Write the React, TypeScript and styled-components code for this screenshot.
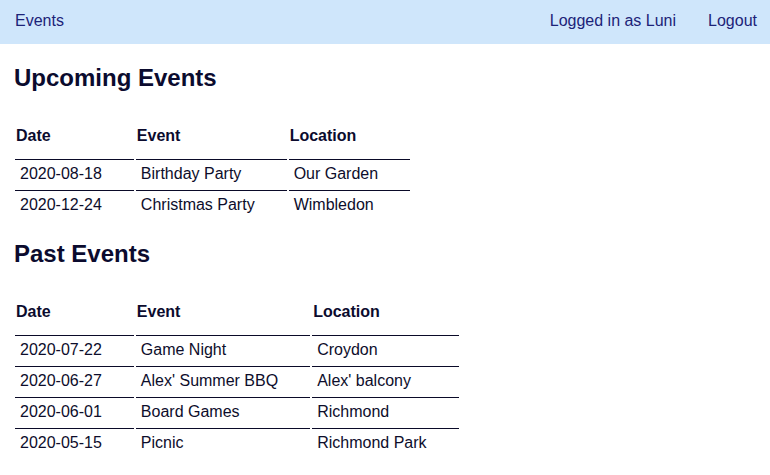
import React from 'react';
import styled, { createGlobalStyle } from 'styled-components';

interface EventRow {
  date: string;
  name: string;
  location: string;
}

const upcoming: EventRow[] = [
  { date: '2020-08-18', name: 'Birthday Party', location: 'Our Garden' },
  { date: '2020-12-24', name: 'Christmas Party', location: 'Wimbledon' },
];

const past: EventRow[] = [
  { date: '2020-07-22', name: 'Game Night', location: 'Croydon' },
  { date: '2020-06-27', name: "Alex' Summer BBQ", location: "Alex' balcony" },
  { date: '2020-06-01', name: 'Board Games', location: 'Richmond' },
  { date: '2020-05-15', name: 'Picnic', location: 'Richmond Park' },
];

const EventTable = ({ rows }: { rows: EventRow[] }) => (
  <Table>
    <thead>
      <tr>
        <Th>Date</Th>
        <Th>Event</Th>
        <Th>Location</Th>
      </tr>
    </thead>
    <tbody>
      {rows.map((row, index) => (
        <tr key={index}>
          <Td>{row.date}</Td>
          <Td>{row.name}</Td>
          <Td>{row.location}</Td>
        </tr>
      ))}
    </tbody>
  </Table>
);

const App: React.FC = () => {
  return (
    <>
      <GlobalStyle />
      <NavBar>
        <NavLink>Events</NavLink>
        <NavRight>
          <NavLink>Logged in as Luni</NavLink>
          <NavLink>Logout</NavLink>
        </NavRight>
      </NavBar>
      <Main>
        <Heading>Upcoming Events</Heading>
        <EventTable rows={upcoming} />
        <Heading>Past Events</Heading>
        <EventTable rows={past} />
      </Main>
    </>
  );
};

export default App;

const GlobalStyle = createGlobalStyle`
  body {
    margin: 0;
    background: #fff;
    color: #0d0d2b;
    font-family: "Liberation Sans", Arial, sans-serif;
    font-size: 16px;
  }
`
const NavBar = styled.nav`
  height: 44px;
  box-sizing: border-box;
  background-color: #cfe6fb;
  display: flex;
  align-items: center;
  justify-content: space-between;
  padding: 0 13px 2px 15px;
`
const NavRight = styled.div`
  display: flex;
  gap: 32px;
`
const NavLink = styled.span`
  color: #1c2378;
  font-size: 16px;
  line-height: 18px;
  cursor: pointer;
`
const Main = styled.main`
  padding: 1px 13px 0;
`
const Heading = styled.h2`
  font-size: 24px;
  font-weight: bold;
  line-height: 28px;
  margin: 19px 0 20px 1px;
  color: #0b0b2e;
`
const Table = styled.table`
  border-spacing: 2px;
  border-collapse: separate;
`
const Th = styled.th`
  text-align: left;
  font-weight: bold;
  line-height: 19px;
  padding: 12px 32px 12px 1px;
  color: #0b0b2e;
`
const Td = styled.td`
  border-top: 1px solid #0a0a28;
  line-height: 18px;
  padding: 5px 32px 5px 5px;
  color: #0d0d2b;
`
